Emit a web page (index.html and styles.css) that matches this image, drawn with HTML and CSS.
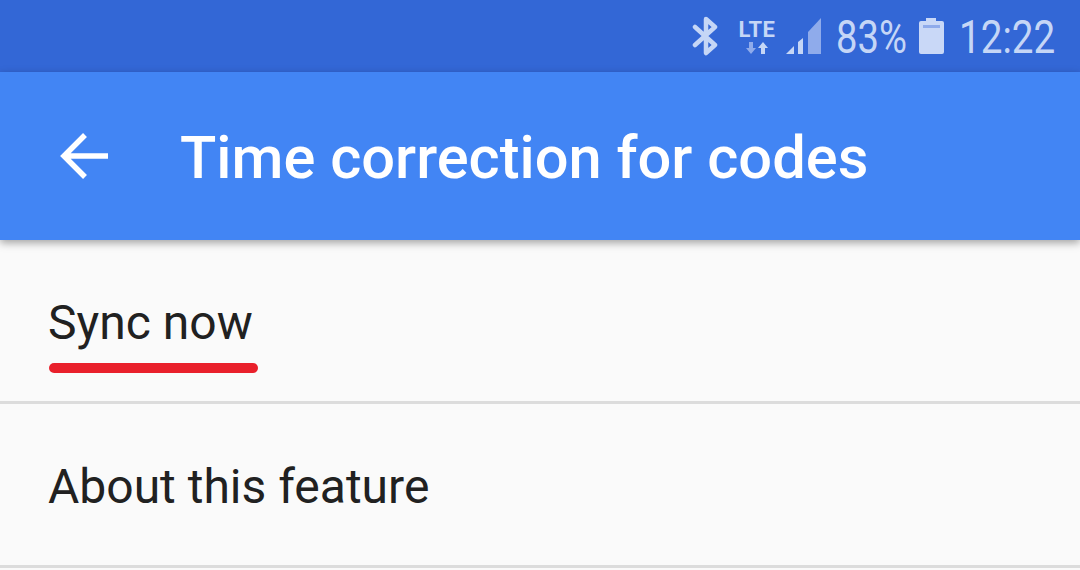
FILE: index.html
```html
<!DOCTYPE html>
<html lang="en">
<head>
    <meta charset="UTF-8">
    <title>Time correction for codes</title>
    <link rel="stylesheet" href="styles.css">
</head>
<body>
    <div class="statusbar">
        <svg class="icon-bt" width="28" height="40" viewBox="0 0 28 40">
            <path d="M3 11 L23 29 L14 37 L14 3 L23 11 L3 29" fill="none" stroke="#c5d6f6" stroke-width="4.5" stroke-linejoin="round" stroke-linecap="round"/>
        </svg>
        <div class="lte">
            <span class="lte-text">LTE</span>
            <svg class="lte-arrows" width="22" height="12" viewBox="0 0 22 12">
                <path d="M3 0 H7 V6 H10 L5 12 L0 6 H3 Z" fill="#8fabeb"/>
                <path d="M15 12 V6 H12 L17 0 L22 6 H19 V12 Z" fill="#c5d6f6"/>
            </svg>
        </div>
        <svg class="icon-signal" width="35" height="36" viewBox="0 0 35 36">
            <path d="M0 36 L8 28 V36 Z" fill="#c5d6f6"/>
            <path d="M12 24 L17 20 V36 H12 Z" fill="#c5d6f6"/>
            <path d="M22 14 L35 0 V36 H22 Z" fill="#8fabeb"/>
        </svg>
        <span class="pct">83%</span>
        <svg class="icon-batt" width="25" height="36" viewBox="0 0 25 36">
            <path d="M7 0 H17 V3 H23 Q25 3 25 5 V34 Q25 36 23 36 H2 Q0 36 0 34 V5 Q0 3 2 3 H7 Z" fill="#c9d8f7"/>
            <rect x="4" y="7" width="17" height="3" fill="#8fabeb"/>
        </svg>
        <span class="clock">12:22</span>
    </div>
    <div class="toolbar">
        <svg class="back" width="50" height="50" viewBox="0 0 50 50">
            <path d="M48 25 H4 M25 4 L4 25 L25 46" fill="none" stroke="#fff" stroke-width="5.500"/>
        </svg>
        <h1>Time correction for codes</h1>
    </div>
    <div class="list">
        <div class="row">
            <span class="label marked">Sync now</span>
        </div>
        <div class="row">
            <span class="label">About this feature</span>
        </div>
    </div>
</body>
</html>
```

FILE: styles.css
```css
* {
    margin: 0;
    padding: 0;
    box-sizing: border-box;
    font-family: Roboto, sans-serif;
}
body {
    background-color: #fafafa;
    overflow: hidden;
    height: 570px;
}
.statusbar {
    background-color: #3367d6;
    height: 72px;
    display: flex;
    justify-content: flex-end;
    align-items: center;
    padding-right: 24px;
    color: #c5d6f6;
}
.icon-bt {
    margin-right: 18px;
}
.lte {
    display: flex;
    flex-direction: column;
    align-items: center;
    width: 38px;
    margin-right: 10px;
}
.lte-text {
    font-size: 22px;
    font-weight: 700;
    line-height: 22px;
    letter-spacing: 0.5px;
}
.lte-arrows {
    margin-top: 1px;
}
.icon-signal {
    margin-right: 15px;
}
.pct {
    font-size: 46px;
    width: 70px;
    margin-right: 13px;
    padding-top: 2px;
    white-space: nowrap;
    transform: scaleX(0.83);
    transform-origin: left center;
}
.icon-batt {
    margin-right: 15px;
}
.clock {
    font-size: 46px;
    width: 97px;
    padding-top: 2px;
    white-space: nowrap;
    transform: scaleX(0.84);
    transform-origin: left center;
}
.toolbar {
    background-color: #4285f4;
    height: 168px;
    display: flex;
    align-items: center;
    padding-left: 60px;
    box-shadow: 0 3px 8px rgba(0, 0, 0, 0.35);
    position: relative;
}
.back {
    margin-right: 70px;
}
.toolbar h1 {
    font-size: 59.6px;
    font-weight: 500;
    color: #fff;
    padding-top: 4px;
}
.row {
    height: 164px;
    padding-left: 48px;
    padding-top: 3px;
    border-bottom: 3px solid #dcdcdc;
    display: flex;
    align-items: center;
}
.label {
    font-size: 48px;
    color: #212121;
    position: relative;
}
.marked::after {
    content: "";
    position: absolute;
    left: 1px;
    right: -5px;
    bottom: -22px;
    height: 10px;
    border-radius: 5px;
    background-color: #e9202b;
}
```
